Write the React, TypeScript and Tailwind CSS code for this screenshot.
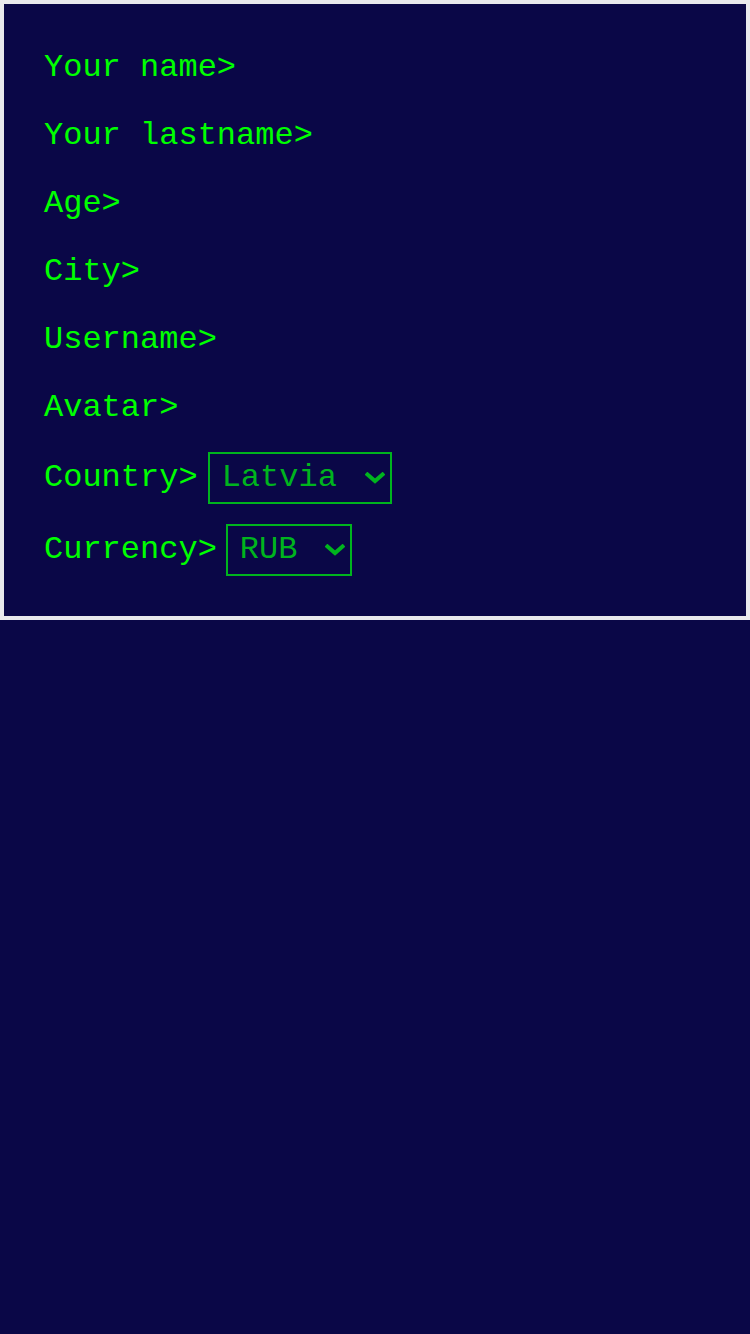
import React from "react";

const mono = { fontFamily: '"Liberation Mono", monospace' };

const Chevron = () => (
  <svg
    className="pointer-events-none absolute right-[7px] top-1/2 -translate-y-1/2"
    width="20"
    height="12"
    viewBox="0 0 20 12"
    fill="none"
  >
    <path d="M2.5 2.5 L10 9 L17.5 2.5" stroke="#00b41e" strokeWidth="4" strokeLinecap="square" />
  </svg>
);

const Field = ({ label }: { label: string }) => (
  <div className="h-9 leading-9">{label}</div>
);

const SelectField = ({
  label,
  options,
  width,
  gap,
}: {
  label: string;
  options: string[];
  width: string;
  gap: string;
}) => (
  <div className={`flex h-[52px] items-center ${gap}`}>
    <span className="leading-9">{label}</span>
    <div className={`relative h-[52px] ${width}`}>
      <select
        style={mono}
        className="h-full w-full appearance-none border-2 border-[#00b41e] bg-transparent pl-3 text-[32px] text-[#00b41e] outline-none"
        defaultValue={options[0]}
      >
        {options.map((o) => (
          <option key={o} value={o} className="bg-[#0a0747]">
            {o}
          </option>
        ))}
      </select>
      <Chevron />
    </div>
  </div>
);

export default function App() {
  return (
    <div className="min-h-screen bg-[#0a0747]" style={mono}>
      <div className="border-4 border-[#e9e9ed] bg-[#0a0747] px-10 pt-[46px] pb-10 text-[32px] text-[#00ff00]">
        <div className="flex flex-col gap-8">
          <Field label="Your name>" />
          <Field label="Your lastname>" />
          <Field label="Age>" />
          <Field label="City>" />
          <Field label="Username>" />
          <Field label="Avatar>" />
        </div>
        <div className="mt-[26px]">
          <SelectField
            label="Country>"
            options={["Latvia", "Russia", "Estonia"]}
            width="w-[184px]"
            gap="gap-[10px]"
          />
        </div>
        <div className="mt-5">
          <SelectField
            label="Currency>"
            options={["RUB", "EUR", "USD"]}
            width="w-[126px]"
            gap="gap-[9px]"
          />
        </div>
      </div>
    </div>
  );
}
